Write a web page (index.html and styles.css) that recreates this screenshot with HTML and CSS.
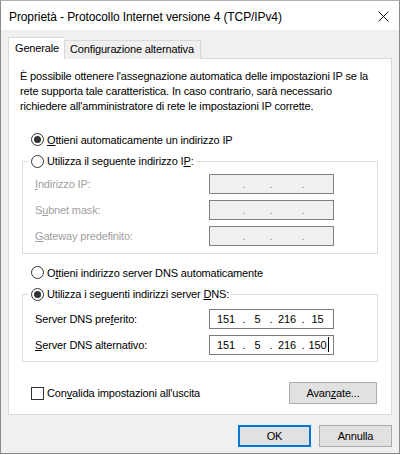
FILE: index.html
```html
<!DOCTYPE html>
<html lang="it">
<head>
<meta charset="utf-8">
<title>Proprietà - Protocollo Internet versione 4 (TCP/IPv4)</title>
<link rel="stylesheet" href="styles.css">
</head>
<body>
<div class="window">
  <div class="titlebar">
    <span class="title">Proprietà - Protocollo Internet versione 4 (TCP/IPv4)</span>
    <span class="close"><svg width="11" height="11" viewBox="0 0 11 11"><path d="M0.5 0.5L10.5 10.5M10.5 0.5L0.5 10.5" stroke="#111" stroke-width="1" fill="none"/></svg></span>
  </div>
  <div class="client">
    <div class="tabs">
      <div class="tab active">Generale</div>
      <div class="tab">Configurazione alternativa</div>
    </div>
    <div class="panel">
      <p class="intro">È possibile ottenere l'assegnazione automatica delle impostazioni IP se la<br>rete supporta tale caratteristica. In caso contrario, sarà necessario<br>richiedere all'amministratore di rete le impostazioni IP corrette.</p>

      <div class="option first"><span class="radio checked"></span><span><u>O</u>ttieni automaticamente un indirizzo IP</span></div>

      <fieldset class="group ipgroup">
        <legend><span class="option"><span class="radio"></span><span>Utilizza il seguente indirizzo I<u>P</u>:</span></span></legend>
        <div class="fields">
          <span class="label disabled"><u>I</u>ndirizzo IP:</span>
          <div class="ip off"><span class="oct o1"></span><span class="dot">.</span><span class="oct o2"></span><span class="dot">.</span><span class="oct o3"></span><span class="dot">.</span><span class="oct o4"></span></div>
          <span class="label disabled">S<u>u</u>bnet mask:</span>
          <div class="ip off"><span class="oct o1"></span><span class="dot">.</span><span class="oct o2"></span><span class="dot">.</span><span class="oct o3"></span><span class="dot">.</span><span class="oct o4"></span></div>
          <span class="label disabled"><u>G</u>ateway predefinito:</span>
          <div class="ip off"><span class="oct o1"></span><span class="dot">.</span><span class="oct o2"></span><span class="dot">.</span><span class="oct o3"></span><span class="dot">.</span><span class="oct o4"></span></div>
        </div>
      </fieldset>

      <div class="option dnsauto"><span class="radio"></span><span>O<u>t</u>tieni indirizzo server DNS automaticamente</span></div>

      <fieldset class="group dnsgroup">
        <legend><span class="option"><span class="radio checked"></span><span>Utilizza i seguenti indirizzi server <u>D</u>NS:</span></span></legend>
        <div class="fields">
          <span class="label">Server DNS pre<u>f</u>erito:</span>
          <div class="ip"><span class="oct o1">151</span><span class="dot">.</span><span class="oct o2">5</span><span class="dot">.</span><span class="oct o3">216</span><span class="dot">.</span><span class="oct o4">15</span></div>
          <span class="label"><u>S</u>erver DNS alternativo:</span>
          <div class="ip"><span class="oct o1">151</span><span class="dot">.</span><span class="oct o2">5</span><span class="dot">.</span><span class="oct o3">216</span><span class="dot">.</span><span class="oct o4 caret">150</span></div>
        </div>
      </fieldset>

      <div class="bottomrow">
        <div class="option"><span class="checkbox"></span><span>Con<u>v</u>alida impostazioni all'uscita</span></div>
        <button class="btn advanced" type="button">Avan<u>z</u>ate...</button>
      </div>
    </div>
    <div class="actions">
      <button class="btn default" type="button">OK</button>
      <button class="btn" type="button">Annulla</button>
    </div>
  </div>
</div>
</body>
</html>
```

FILE: styles.css
```css
* { box-sizing: border-box; }

html, body {
  margin: 0;
  padding: 0;
  background: #ffffff;
}

body {
  font-family: "Liberation Sans", Arial, sans-serif;
  font-size: 11px;
  letter-spacing: -0.15px;
  color: #000;
}

.window {
  width: 400px;
  height: 454px;
  border: 1px solid #8a8a8a;
  border-top-color: #b0b0b0;
  background: #f0f0f0;
  display: flex;
  flex-direction: column;
}

.titlebar {
  height: 29px;
  background: #ffffff;
  display: flex;
  align-items: center;
  justify-content: space-between;
  padding: 0 10px 0 8px;
  font-size: 12px;
  letter-spacing: -0.1px;
  flex: none;
}

.title { padding-top: 2px; }

.close {
  display: flex;
  align-items: center;
  padding-top: 2px;
}

.client {
  padding: 7px 7px 0 7px;
  display: flex;
  flex-direction: column;
}

.tabs {
  display: flex;
  align-items: flex-end;
  height: 22px;
  position: relative;
  z-index: 1;
}

.tab {
  height: 19px;
  border: 1px solid #d9d9d9;
  border-bottom: none;
  background: #f0f0f0;
  padding: 2px 6px 0 5px;
  white-space: nowrap;
}

.tab.active {
  height: 22px;
  background: #ffffff;
  padding: 4px 6px 0 6px;
  border-right: none;
  width: 56px;
}

.panel {
  height: 357px;
  margin-top: -1px;
  border: 1px solid #d9d9d9;
  background: #ffffff;
  padding: 10px 13px 0 13px;
  display: flex;
  flex-direction: column;
}

.intro {
  margin: 0 0 0 -2px;
  line-height: 15px;
  white-space: nowrap;
}

u { text-decoration: underline; text-underline-offset: 1px; }

.option {
  display: flex;
  align-items: center;
  gap: 3px;
  height: 15px;
  white-space: nowrap;
}

.option.first { margin: 18px 0 0 9px; }
.option.dnsauto { margin: 11px 0 0 9px; }

.radio {
  width: 13px;
  height: 13px;
  border: 1px solid #333333;
  border-radius: 50%;
  background: #fff;
  display: flex;
  align-items: center;
  justify-content: center;
  flex: none;
}

.radio.checked::after {
  content: "";
  width: 7px;
  height: 7px;
  border-radius: 50%;
  background: #333333;
}

.checkbox {
  width: 13px;
  height: 13px;
  border: 1px solid #333333;
  background: #fff;
  flex: none;
}

.group {
  margin: 6px 0 0 0;
  border: 1px solid #dcdcdc;
  padding: 5px 12px 7px 12px;
  min-width: 0;
}

.group legend {
  padding: 0 2px;
  margin-left: -6px;
  height: 16px;
  display: flex;
  align-items: center;
}

.dnsgroup { margin-top: 6px; padding-top: 7px; padding-bottom: 6px; }

.fields {
  display: grid;
  grid-template-columns: 174px 125px;
  row-gap: 6px;
  align-items: center;
}

.label { white-space: nowrap; }
.label.disabled { color: #a0a0a0; }

.ip {
  height: 20px;
  border: 1px solid #7a7a7a;
  background: #ffffff;
  display: flex;
  align-items: center;
  padding-left: 1px;
  font-size: 11px;
}

.ip.off {
  background: #f0f0f0;
  border-color: #7f7f7f;
  color: #8a8a8a;
}

.oct { text-align: center; height: 14px; line-height: 14px; }
.o1 { width: 30px; }
.o2 { width: 21px; }
.o3 { width: 26px; }
.o4 { width: 23px; }
.dot { width: 6px; text-align: center; height: 14px; line-height: 14px; }

.caret { position: relative; }
.caret::after {
  content: "";
  position: absolute;
  right: 0;
  top: -1px;
  width: 1px;
  height: 15px;
  background: #000;
}

.bottomrow {
  margin: 20px 1px 0 9px;
  display: flex;
  align-items: center;
  justify-content: space-between;
}

.btn {
  font-family: inherit;
  font-size: 11px;
  letter-spacing: inherit;
  color: #000;
  height: 22px;
  width: 73px;
  background: #e1e1e1;
  border: 1px solid #adadad;
  padding: 0;
  margin: 0;
}

.btn.advanced { width: 88px; }

.btn.default {
  border: 2px solid #0078d7;
}

.actions {
  display: flex;
  justify-content: flex-end;
  gap: 8px;
  margin-top: 10px;
}
```
